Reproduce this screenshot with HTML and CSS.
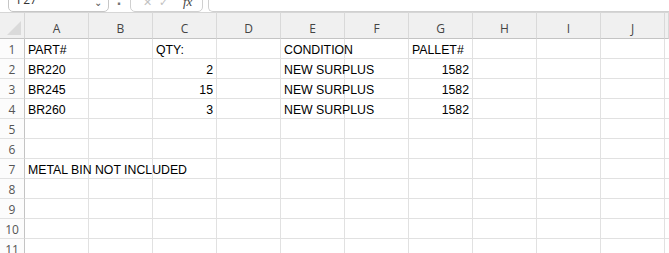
FILE: index.html
```html
<!DOCTYPE html>
<html lang="en">
<head>
    <meta charset="UTF-8">
    <title>Sheet1</title>
    <link rel="stylesheet" href="styles.css">
</head>
<body>
    <div class="toolbar">
        <div class="namebox"><span>F27</span><span class="caret">&#8964;</span></div>
        <div class="dots">&#183;</div>
        <div class="fxbox"><span class="ico">&#10005;</span><span class="ico">&#10003;</span><span class="fx">fx</span></div>
        <div class="formula"></div>
    </div>

    <div class="sheet">
        <div class="corner"><span class="tri"></span></div>
        <div class="colhead">A</div>
        <div class="colhead">B</div>
        <div class="colhead">C</div>
        <div class="colhead">D</div>
        <div class="colhead">E</div>
        <div class="colhead">F</div>
        <div class="colhead">G</div>
        <div class="colhead">H</div>
        <div class="colhead">I</div>
        <div class="colhead">J</div>
        <div class="colhead"></div>
    </div>

    <div class="sheet" id="rows"></div>

    <script>
        const dados = {
            1: ['PART#', '', 'QTY:', '', 'CONDITION', '', 'PALLET#'],
            2: ['BR220', '', 2, '', 'NEW SURPLUS', '', 1582],
            3: ['BR245', '', 15, '', 'NEW SURPLUS', '', 1582],
            4: ['BR260', '', 3, '', 'NEW SURPLUS', '', 1582],
            7: ['METAL BIN NOT INCLUDED']
        };
        const rows = document.getElementById('rows');

        for (let r = 1; r <= 11; r++) {
            const head = document.createElement('div');
            head.className = 'rowhead';
            head.innerText = r;
            rows.appendChild(head);

            const linha = dados[r] || [];
            for (let c = 0; c < 11; c++) {
                const cell = document.createElement('div');
                const valor = linha[c];
                cell.className = 'cell';
                if (typeof valor === 'number') cell.classList.add('num');
                if (valor !== undefined) cell.innerText = valor;
                rows.appendChild(cell);
            }
        }
    </script>
</body>
</html>
```

FILE: styles.css
```css
body {
    margin: 0;
    padding: 0;
    background: #fff;
    width: 669px;
    height: 253px;
    overflow: hidden;
    font-family: "Liberation Sans", Arial, sans-serif;
}
.toolbar {
    height: 12px;
    display: flex;
    align-items: flex-end;
    overflow: hidden;
    background: #fff;
}
.namebox {
    margin-left: 8px;
    width: 101px;
    height: 24px;
    border: 1px solid #c6c6c6;
    border-radius: 5px;
    box-sizing: border-box;
    display: flex;
    justify-content: space-between;
    align-items: flex-end;
    padding: 0 6px 4px 8px;
    font-family: "Open Sans", sans-serif;
    font-size: 12px;
    line-height: 14px;
    color: #333;
}
.caret {
    font-size: 10px;
    line-height: 10px;
    color: #555;
}
.dots {
    width: 21px;
    text-align: center;
    font-size: 16px;
    line-height: 12px;
    font-weight: bold;
    color: #777;
    margin-bottom: 2px;
}
.fxbox {
    width: 73px;
    height: 24px;
    border: 1px solid #d0d0d0;
    border-radius: 5px;
    box-sizing: border-box;
    display: flex;
    align-items: flex-end;
    gap: 7px;
    padding: 0 6px 3px 12px;
    color: #c2c2c2;
    font-size: 11px;
    line-height: 12px;
}
.fx {
    margin-left: 8px;
    color: #444;
    font-family: "Liberation Serif", serif;
    font-style: italic;
    font-size: 13px;
}
.formula {
    margin-left: 5px;
    flex: 1;
    height: 24px;
    border: 1px solid #d0d0d0;
    border-right: none;
    border-radius: 5px 0 0 5px;
    box-sizing: border-box;
}
.sheet {
    display: grid;
    grid-template-columns: 25px repeat(10, 64px) 1fr;
}
.corner, .colhead {
    height: 27px;
    box-sizing: border-box;
    background: #f0f0f0;
    border-top: 1px solid #d6d6d6;
    border-bottom: 1px solid #c4c4c4;
}
.corner {
    border-right: 1px solid #d6d6d6;
    display: flex;
    align-items: flex-end;
    justify-content: flex-end;
    padding: 0 3px 3px 0;
}
.tri {
    width: 0;
    height: 0;
    border-left: 14px solid transparent;
    border-bottom: 14px solid #dadada;
}
.colhead {
    border-right: 1px solid #d9d9d9;
    text-align: center;
    font-family: "Open Sans", sans-serif;
    font-size: 12px;
    line-height: 14px;
    padding-top: 9px;
    color: #444;
}
.rowhead, .cell {
    height: 20px;
    box-sizing: border-box;
    border-bottom: 1px solid #e1e1e1;
    border-right: 1px solid #e1e1e1;
    padding-top: 3px;
    line-height: 16px;
    white-space: nowrap;
}
.rowhead {
    background: #fcfcfc;
    border-right: 1px solid #c4c4c4;
    text-align: center;
    font-family: "Open Sans", sans-serif;
    font-size: 12px;
    color: #555;
}
.cell {
    padding-left: 3px;
    padding-right: 3px;
    font-size: 12.3px;
    color: #000;
    overflow: visible;
}
.num {
    text-align: right;
}
```
